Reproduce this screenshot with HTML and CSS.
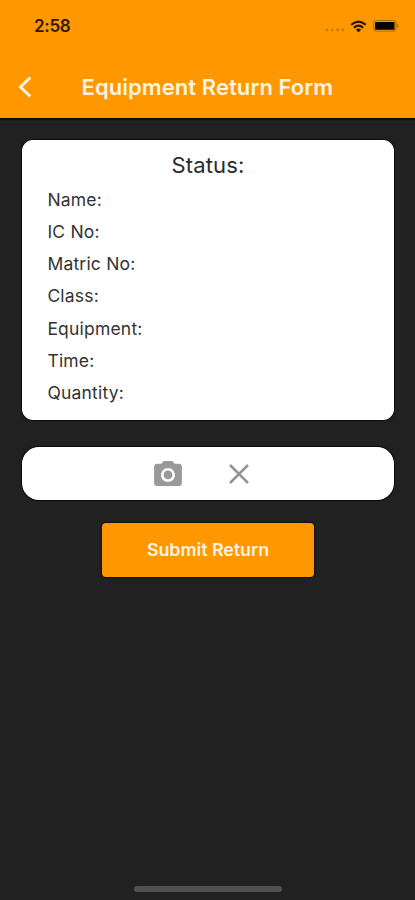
FILE: index.html
```html
<!DOCTYPE html>
<html lang="en">
<head>
<meta charset="utf-8">
<title>Equipment Return Form</title>
<link rel="stylesheet" href="styles.css">
</head>
<body>
<header class="app-header">
  <div class="status-bar">
    <span class="clock">2:58</span>
    <div class="indicators">
      <svg class="signal" viewBox="0 0 20 4"><circle cx="2" cy="2" r="1.4"/><circle cx="7.3" cy="2" r="1.4"/><circle cx="12.6" cy="2" r="1.4"/><circle cx="17.9" cy="2" r="1.4"/></svg>
      <svg class="wifi" viewBox="0 0 17 13"><path d="M1.2 4.8Q8.5-1.6 15.8 4.8M3.9 7.7Q8.5 3.6 13.1 7.7" fill="none" stroke="#241600" stroke-width="2.1"/><path d="M5.9 9.5Q8.5 7.4 11.1 9.5L8.5 12.4Z" fill="#241600"/></svg>
      <svg class="battery" viewBox="0 0 27 12"><rect x=".5" y=".5" width="22.5" height="10.6" rx="2" fill="none" stroke="#b06c05"/><rect x="2" y="2" width="19.5" height="7.8" rx=".6" fill="#080400"/><path d="M24 3.5Q26.5 5.8 24 8Z" fill="#9b5f04"/></svg>
    </div>
  </div>
  <div class="nav-bar">
    <svg class="back" viewBox="0 0 14 24"><path d="M12.3 2.5 2.5 12 12.3 21.5" fill="none" stroke="#fff4e2" stroke-width="3"/></svg>
    <h1 class="title">Equipment Return Form</h1>
  </div>
</header>
<main class="content">
  <section class="details">
    <h2 class="status">Status:</h2>
    <ul class="fields">
      <li>Name:</li>
      <li>IC No:</li>
      <li>Matric No:</li>
      <li>Class:</li>
      <li>Equipment:</li>
      <li>Time:</li>
      <li>Quantity:</li>
    </ul>
  </section>
  <section class="photo-bar">
    <svg class="camera" viewBox="2 2 20 18"><path fill="#999" fill-rule="evenodd" d="M9 2 7.17 4H4c-1.1 0-2 .9-2 2v12c0 1.1.9 2 2 2h16c1.1 0 2-.9 2-2V6c0-1.1-.9-2-2-2h-3.17L15 2H9zm3 15c-2.76 0-5-2.24-5-5s2.24-5 5-5 5 2.24 5 5-2.24 5-5 5z"/><circle cx="12" cy="12" r="3.2" fill="#999"/></svg>
    <svg class="clear" viewBox="0 0 20 20"><path d="M1 1 19 19M19 1 1 19" fill="none" stroke="#949494" stroke-width="2.5"/></svg>
  </section>
  <button class="submit">Submit Return</button>
</main>
<div class="home-indicator"></div>
</body>
</html>
```

FILE: styles.css
```css
* { box-sizing: border-box; }
body {
  margin: 0;
  height: 900px;
  display: flex;
  flex-direction: column;
  background: #212121;
  font-family: Inter, "Liberation Sans", sans-serif;
  overflow: hidden;
}
.app-header {
  height: 119px;
  background: #ff9800;
  border-bottom: 1px solid #140c00;
  box-shadow: 0 1px 1px #111;
}
.status-bar {
  height: 56px;
  padding: 0 15px 4px 34px;
  display: flex;
  align-items: center;
  justify-content: space-between;
}
.clock {
  font-size: 17px;
  line-height: 20px;
  font-weight: 600;
  letter-spacing: -0.3px;
  color: #2b1a00;
}
.indicators { display: flex; align-items: center; }
.signal { width: 20px; height: 4px; margin: 8px 5px 0 0; fill: #c37808; }
.wifi { width: 17px; height: 13px; margin-right: 6px; }
.battery { width: 27px; height: 12px; }
.nav-bar {
  height: 62px;
  display: flex;
  align-items: center;
  padding-left: 18px;
}
.back { width: 14px; height: 24px; }
.title {
  margin: 0 0 0 49.5px;
  font-size: 22px;
  line-height: 28px;
  font-weight: 600;
  letter-spacing: 0.07px;
  color: #fff4e2;
  white-space: nowrap;
}
.content {
  flex: 1;
  display: flex;
  flex-direction: column;
  align-items: center;
  padding: 21px 21px 0 22px;
}
.details {
  width: 100%;
  height: 280px;
  padding: 10px 25.4px 0;
  background: #fff;
  border-radius: 11px;
  box-shadow: 0 0 1px 1px #0b0b0b;
}
.status {
  margin: 0;
  text-align: center;
  font-size: 22px;
  line-height: 30px;
  font-weight: 400;
  letter-spacing: 0.15px;
  color: #2b2b2b;
}
.fields {
  list-style: none;
  margin: 4px 0 0;
  padding: 0;
  font-size: 17.5px;
  line-height: 32.15px;
  letter-spacing: 0.2px;
  font-weight: 370;
  color: #333;
}
.photo-bar {
  width: 100%;
  height: 53px;
  margin-top: 27px;
  padding-left: 132px;
  display: flex;
  align-items: center;
  gap: 47px;
  background: #fff;
  border-radius: 17px;
  box-shadow: 0 0 1px 1px #0b0b0b;
}
.camera { width: 28px; height: 25px; }
.clear { width: 20px; height: 20px; }
.submit {
  width: 212px;
  height: 54px;
  margin-top: 23px;
  padding: 0;
  border: 0;
  border-radius: 4px;
  background: #ff9800;
  color: #fff4e2;
  font: 600 17.8px/24px Inter, "Liberation Sans", sans-serif;
  box-shadow: 0 0 1px 1px #111;
}
.home-indicator {
  width: 148px;
  height: 6px;
  margin: 0 0 8px 134px;
  border-radius: 3px;
  background: #505050;
}
```
